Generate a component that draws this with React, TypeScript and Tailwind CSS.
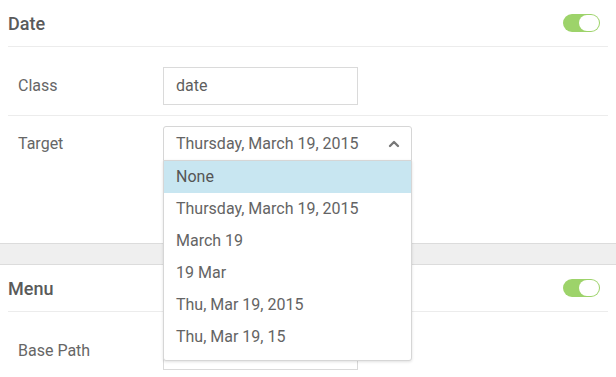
import { ChevronUp } from "lucide-react";

const formats = [
  "None",
  "Thursday, March 19, 2015",
  "March 19",
  "19 Mar",
  "Thu, Mar 19, 2015",
  "Thu, Mar 19, 15",
];

function Toggle() {
  return (
    <div className="relative h-[18px] w-[37px] rounded-full bg-[#9dd36a]">
      <div className="absolute right-[1px] top-[1px] h-[16px] w-[20px] rounded-full bg-white" />
    </div>
  );
}

function SectionHeader({ title }: { title: string }) {
  return (
    <div className="flex h-[47px] items-center justify-between border-b border-[#ececec] pr-[8px]">
      <span className="text-[18px] font-medium text-[#5a5a5a]">{title}</span>
      <Toggle />
    </div>
  );
}

function TextInput({ value }: { value?: string }) {
  return (
    <div className="flex h-[38px] w-[195px] items-center border border-[#dadada] px-[12px] text-[16px] text-[#5e5e5e]">
      {value}
    </div>
  );
}

function DateSelect() {
  return (
    <div className="relative w-[249px]">
      <div className="flex h-[35px] items-center justify-between rounded-t-[3px] border border-[#d6d6d6] pl-[12px] pr-[9px] text-[16px] text-[#646464]">
        <span>Thursday, March 19, 2015</span>
        <ChevronUp size={16} strokeWidth={3.5} className="text-[#777]" />
      </div>
      <ul className="absolute left-0 top-[34px] z-10 w-full rounded-b-[3px] border border-[#d6d6d6] bg-white pb-[7px] shadow-[0_1px_3px_rgba(0,0,0,0.12)]">
        {formats.map((f, i) => (
          <li
            key={f}
            className={`flex h-[32px] items-center pl-[12px] text-[16px] ${i === 0 ? "bg-[#c8e6f1] text-[#555]" : "text-[#646464]"}`}
          >
            {f}
          </li>
        ))}
      </ul>
    </div>
  );
}

export default function App() {
  return (
    <div className="h-[377px] w-[616px] overflow-hidden bg-white font-['Roboto',sans-serif]">
      <section className="h-[243px] px-[8px]">
        <SectionHeader title="Date" />
        <div className="flex items-center border-b border-[#ececec] pb-[10px] pl-[10px] pt-[20px]">
          <span className="w-[145px] text-[16px] text-[#666]">Class</span>
          <TextInput value="date" />
        </div>
        <div className="flex items-start pl-[10px] pt-[10px]">
          <span className="w-[145px] pt-[6px] text-[16px] text-[#666]">Target</span>
          <DateSelect />
        </div>
      </section>

      <div className="h-[22px] border-y border-[#dcdcdc] bg-[#efefef]" />

      <section className="px-[8px]">
        <SectionHeader title="Menu" />
        <div className="flex items-center pl-[10px] pt-[20px]">
          <span className="w-[145px] text-[16px] text-[#666]">Base Path</span>
          <TextInput />
        </div>
      </section>
    </div>
  );
}
